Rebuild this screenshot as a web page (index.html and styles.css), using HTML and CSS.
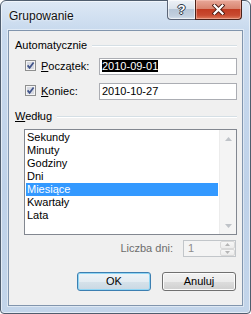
FILE: index.html
```html
<!DOCTYPE html>
<html lang="pl">
<head>
    <meta charset="UTF-8">
    <meta name="viewport" content="width=device-width, initial-scale=1.0">
    <title>Grupowanie</title>
    <link rel="stylesheet" href="styles.css">
</head>
<body>
    <div class="window">
        <div class="titlebar">
            <span class="title">Grupowanie</span>
            <div class="capbtns">
                <div class="capbtn help">?</div>
                <div class="capbtn close">
                    <svg width="13" height="11" viewBox="0 0 13 11">
                        <path d="M2.5 1.5 L10.5 9.5 M10.5 1.5 L2.5 9.5" stroke="#4a1a12" stroke-width="4" stroke-linecap="square"/>
                        <path d="M2.5 1.5 L10.5 9.5 M10.5 1.5 L2.5 9.5" stroke="#ffffff" stroke-width="2.2" stroke-linecap="square"/>
                    </svg>
                </div>
            </div>
        </div>
        <div class="client">
            <div class="grouphead">
                <span>Automatycznie</span>
                <div class="rule"></div>
            </div>
            <div class="row first">
                <svg class="check" width="11" height="11" viewBox="0 0 11 11">
                    <rect x="0.5" y="0.5" width="10" height="10" fill="#f4f4f4" stroke="#8e8f8f"/>
                    <rect x="2" y="2" width="7" height="7" fill="#d7dae2"/>
                    <path d="M2.6 5.4 L4.6 7.8 L8.6 2.6" fill="none" stroke="#41548a" stroke-width="1.7"/>
                </svg>
                <span class="lbl"><u>P</u>oczątek:</span>
                <div class="edit"><span class="sel">2010-09-01</span></div>
            </div>
            <div class="row">
                <svg class="check" width="11" height="11" viewBox="0 0 11 11">
                    <rect x="0.5" y="0.5" width="10" height="10" fill="#f4f4f4" stroke="#8e8f8f"/>
                    <rect x="2" y="2" width="7" height="7" fill="#d7dae2"/>
                    <path d="M2.6 5.4 L4.6 7.8 L8.6 2.6" fill="none" stroke="#41548a" stroke-width="1.7"/>
                </svg>
                <span class="lbl"><u>K</u>oniec:</span>
                <div class="edit">2010-10-27</div>
            </div>
            <div class="grouphead second">
                <span><u>W</u>edług</span>
                <div class="rule"></div>
            </div>
            <div class="listbox">
                <div class="items">
                    <div class="item">Sekundy</div>
                    <div class="item">Minuty</div>
                    <div class="item">Godziny</div>
                    <div class="item">Dni</div>
                    <div class="item selected">Miesiące</div>
                    <div class="item">Kwartały</div>
                    <div class="item">Lata</div>
                </div>
                <div class="vscroll">
                    <div class="sbtn">
                        <svg width="7" height="4" viewBox="0 0 7 4"><path d="M0 4 L3.5 0 L7 4 Z" fill="#bfc3c8"/></svg>
                    </div>
                    <div class="track"></div>
                    <div class="sbtn">
                        <svg width="7" height="4" viewBox="0 0 7 4"><path d="M0 0 L3.5 4 L7 0 Z" fill="#bfc3c8"/></svg>
                    </div>
                </div>
            </div>
            <div class="daysrow">
                <span class="disabled">Liczba dni:</span>
                <div class="spin">
                    <span class="spinval">1</span>
                    <div class="spinbtns">
                        <div class="spinbtn"><svg width="5" height="3" viewBox="0 0 5 3"><path d="M0 3 L2.5 0 L5 3 Z" fill="#b5b5b5"/></svg></div>
                        <div class="spinbtn"><svg width="5" height="3" viewBox="0 0 5 3"><path d="M0 0 L2.5 3 L5 0 Z" fill="#b5b5b5"/></svg></div>
                    </div>
                </div>
            </div>
            <div class="buttons">
                <div class="btn default">OK</div>
                <div class="btn">Anuluj</div>
            </div>
        </div>
    </div>
</body>
</html>
```

FILE: styles.css
```css
*{
    box-sizing: border-box;
}

body{
    margin: 0;
    background-color: #ffffff;
    font-family: "Liberation Sans", Arial, sans-serif;
    font-size: 11px;
    line-height: 13px;
    color: #000000;
}

.window{
    width: 251px;
    height: 314px;
    display: flex;
    flex-direction: column;
    padding: 0 7px 7px 7px;
    border: 1px solid #4f5d6e;
    border-radius: 6px 6px 4px 4px;
    background-image: linear-gradient(#dde8f5, #c9daee 28px, #bfd2e9 60%, #c3d5ea);
    box-shadow: inset 0 0 0 1px rgba(255, 255, 255, 0.55);
}

.titlebar{
    height: 29px;
    display: flex;
    justify-content: space-between;
    align-items: flex-start;
}

.title{
    align-self: center;
    margin-left: 1px;
    font-size: 12px;
    line-height: 14px;
    color: #111111;
    text-shadow: 0 0 3px #ffffff;
}

.capbtns{
    display: flex;
    margin-top: -1px;
    margin-right: 1px;
}

.capbtn{
    height: 20px;
    display: flex;
    align-items: center;
    justify-content: center;
    border: 1px solid #5b6577;
    border-top: none;
}

.help{
    width: 28px;
    border-right: none;
    border-radius: 0 0 0 4px;
    background-image: linear-gradient(#eef2f7, #dbe3ec 45%, #b7c6d7 50%, #c3d0df 85%, #d7e2ee);
    box-shadow: inset 0 0 0 1px rgba(255, 255, 255, 0.6);
    color: #ffffff;
    font-weight: bold;
    font-size: 13px;
    text-shadow: 0 0 1px #2c3848, 1px 0 0 #2c3848, -1px 0 0 #2c3848, 0 1px 0 #2c3848, 0 -1px 0 #2c3848;
}

.close{
    width: 47px;
    border-color: #4b2219;
    border-radius: 0 0 4px 0;
    background-image: linear-gradient(#e8a899, #d98570 45%, #c23c22 50%, #c84a30 80%, #de7c5c);
    box-shadow: inset 0 0 0 1px rgba(255, 210, 200, 0.45);
}

.client{
    flex: 1;
    display: flex;
    flex-direction: column;
    padding: 8px 5px 0 6px;
    background-color: #f0f0f0;
    border: 1px solid #8195ad;
    box-shadow: 0 0 0 1px rgba(255, 255, 255, 0.45);
}

.grouphead{
    display: flex;
    align-items: center;
    height: 13px;
}

.grouphead.second{
    margin-top: 10px;
}

.rule{
    flex: 1;
    margin-left: 5px;
    height: 2px;
    border-top: 1px solid #d5dfe5;
    border-bottom: 1px solid #ffffff;
}

.row{
    display: flex;
    align-items: center;
    height: 17px;
    margin-top: 8px;
    padding-left: 10px;
}

.row.first{
    margin-top: 6px;
}

.check{
    flex: none;
    margin-top: -2px;
}

.lbl{
    margin-left: 5px;
}

.edit{
    margin-left: auto;
    width: 138px;
    height: 17px;
    padding: 1px 2px;
    background-color: #ffffff;
    border: 1px solid #abadb3;
    border-top-color: #abadb3;
}

.sel{
    background-color: #000000;
    color: #ffffff;
}

.listbox{
    display: flex;
    height: 106px;
    margin-top: 6px;
    margin-left: 9px;
    background-color: #ffffff;
    border: 1px solid #828790;
}

.items{
    flex: 1;
    padding: 1px 1px 0 1px;
}

.item{
    height: 13px;
    padding-left: 1px;
}

.item.selected{
    background-color: #3399ff;
    color: #ffffff;
}

.vscroll{
    width: 17px;
    display: flex;
    flex-direction: column;
    background-color: #f4f4f4;
    border-left: 1px solid #ececec;
}

.sbtn{
    height: 17px;
    display: flex;
    align-items: center;
    justify-content: center;
}

.track{
    flex: 1;
}

.daysrow{
    display: flex;
    align-items: center;
    justify-content: flex-end;
    height: 17px;
    margin-top: 5px;
    padding-right: 1px;
}

.disabled{
    color: #6d6d6d;
}

.spin{
    width: 53px;
    height: 17px;
    margin-left: 10px;
    display: flex;
    align-items: center;
    background-color: #f4f4f4;
    border: 1px solid #c2c6ca;
}

.spinval{
    flex: 1;
    padding-left: 4px;
    color: #8d8d8d;
}

.spinbtns{
    width: 15px;
    height: 15px;
    display: flex;
    flex-direction: column;
}

.spinbtn{
    flex: 1;
    display: flex;
    align-items: center;
    justify-content: center;
    border: 1px solid #d9d9d9;
    border-radius: 2px;
    background-image: linear-gradient(#f7f7f7, #ececec);
}

.buttons{
    display: flex;
    justify-content: flex-end;
    gap: 11px;
    margin-top: 15px;
    padding-right: 1px;
}

.btn{
    width: 74px;
    height: 19px;
    line-height: 17px;
    text-align: center;
    border: 1px solid #707070;
    border-radius: 3px;
    background-image: linear-gradient(#f2f2f2, #ebebeb 50%, #dddddd 51%, #cfcfcf);
    box-shadow: inset 0 0 0 1px #fbfbfb;
}

.btn.default{
    border-color: #3c7fb1;
    background-image: linear-gradient(#eef4f8, #e3ecf2 50%, #d6e2ea 51%, #c9d8e3);
    box-shadow: inset 0 0 0 1px #8fd6f5;
}
```
